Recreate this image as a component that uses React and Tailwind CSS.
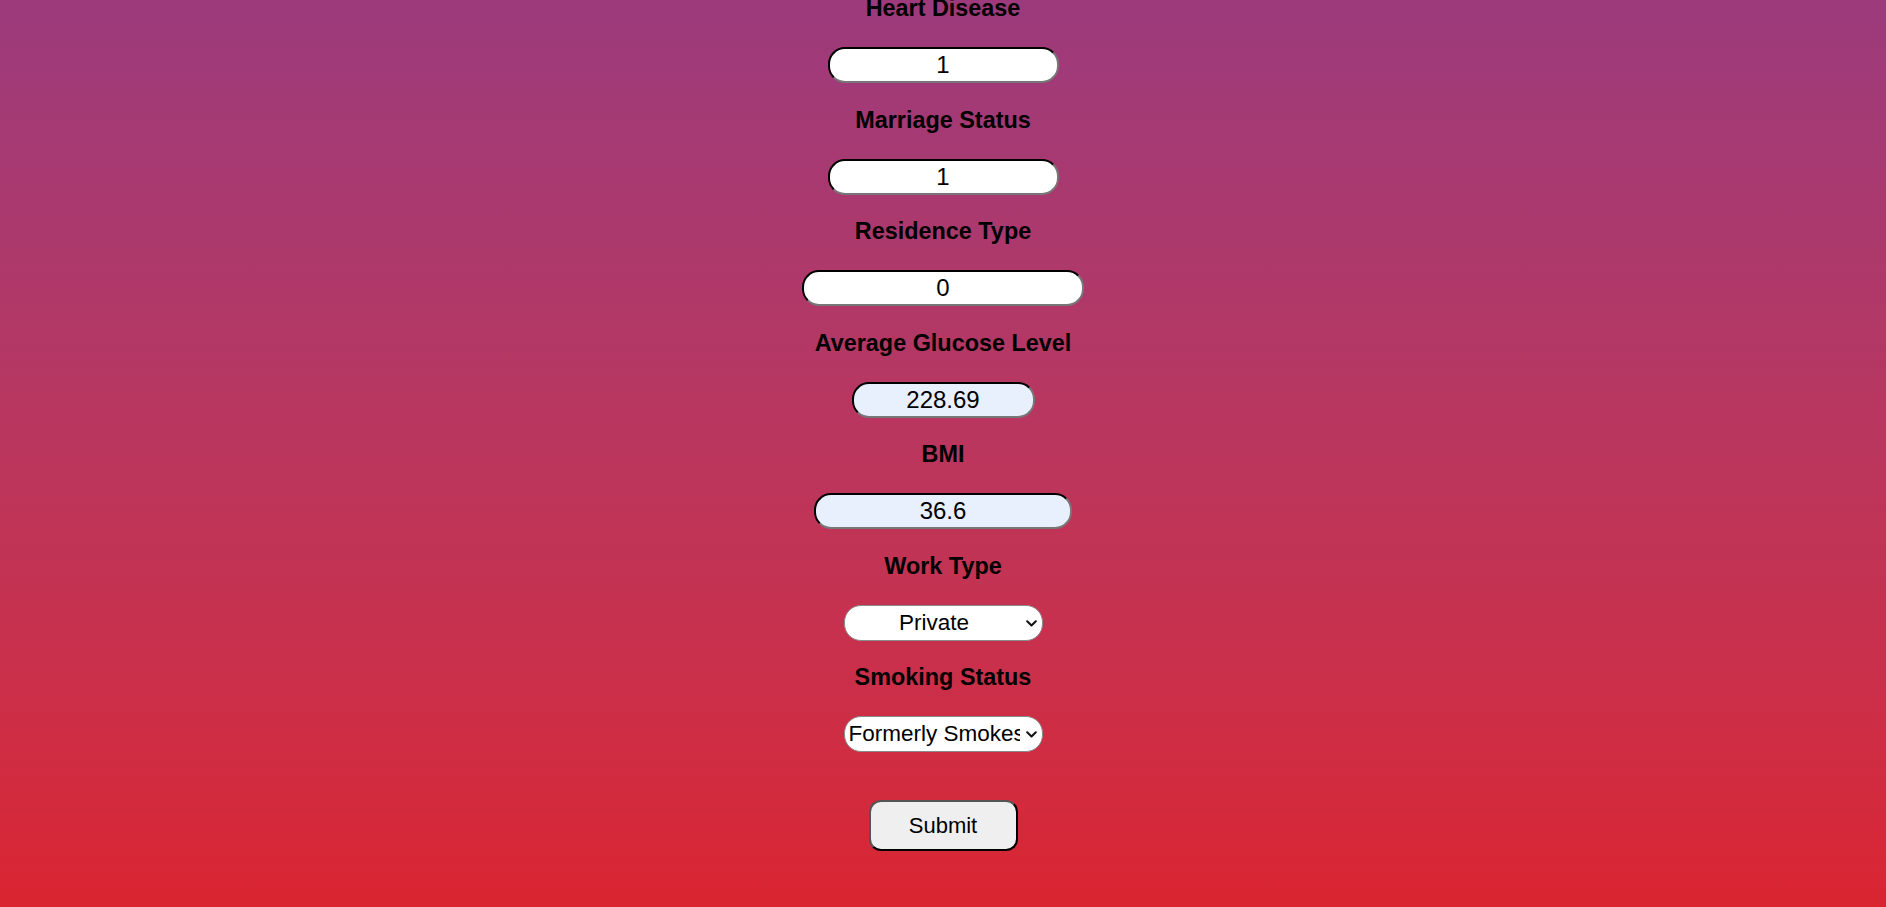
export default function App() {
  const field = (label, value, width, bg) => (
    <div className="flex flex-col items-center">
      <div className="h-[28px] leading-[28px] text-[23.4px] font-bold text-black">{label}</div>
      <input
        readOnly
        value={value}
        className={`mt-[25px] mb-[22.5px] h-[36px] ${width} ${bg} rounded-[17px] border-2 [border-style:inset] border-t-[#222] border-l-[#222] border-b-[#777] border-r-[#777] text-center text-[24px] text-black outline-none`}
      />
    </div>
  )

  const choice = (label, value, options, align) => (
    <div className="flex flex-col items-center">
      <div className="h-[28px] leading-[28px] text-[23.4px] font-bold text-black">{label}</div>
      <div className="relative mt-[25px] mb-[22.5px]">
        <select
          defaultValue={value}
          className={`appearance-none block h-[36px] w-[199px] pl-[4px] pr-[22px] bg-white rounded-[17px] border border-[#8a8a8a] ${align} text-[22.5px] text-black outline-none`}
        >
          {options.map((o) => (
            <option key={o} value={o}>{o}</option>
          ))}
        </select>
        <svg
          className="pointer-events-none absolute right-[6px] top-[15px]"
          width="11"
          height="7"
          viewBox="0 0 11 7"
          fill="none"
        >
          <path d="M1.2 1.2 5.5 5.5 9.8 1.2" stroke="#111" strokeWidth="2" strokeLinecap="round" strokeLinejoin="round" />
        </svg>
      </div>
    </div>
  )

  return (
    <div
      className="min-h-screen h-[907px] overflow-hidden bg-gradient-to-b from-[#9c3a7c] to-[#da2430]"
      style={{ fontFamily: '"Liberation Sans", Arial, sans-serif' }}
    >
      <div className="flex flex-col items-center -mt-[6px]">
        {field('Heart Disease', '1', 'w-[231px]', 'bg-white')}
        {field('Marriage Status', '1', 'w-[231px]', 'bg-white')}
        {field('Residence Type', '0', 'w-[282px]', 'bg-white')}
        {field('Average Glucose Level', '228.69', 'w-[183px]', 'bg-[#e8f0fe]')}
        {field('BMI', '36.6', 'w-[258px]', 'bg-[#e8f0fe]')}
        {choice('Work Type', 'Private', ['Private', 'Self-employed', 'Govt Job', 'Children', 'Never Worked'], 'text-center [text-align-last:center]')}
        {choice('Smoking Status', 'Formerly Smokes', ['Formerly Smokes', 'Never Smoked', 'Smokes', 'Unknown'], 'text-left')}
        <button className="mt-[25px] w-[149px] h-[51px] bg-[#efefef] rounded-[12px] border-2 [border-style:outset] border-t-[#555] border-l-[#555] border-b-[#111] border-r-[#111] text-[22px] text-black">
          Submit
        </button>
      </div>
    </div>
  )
}
